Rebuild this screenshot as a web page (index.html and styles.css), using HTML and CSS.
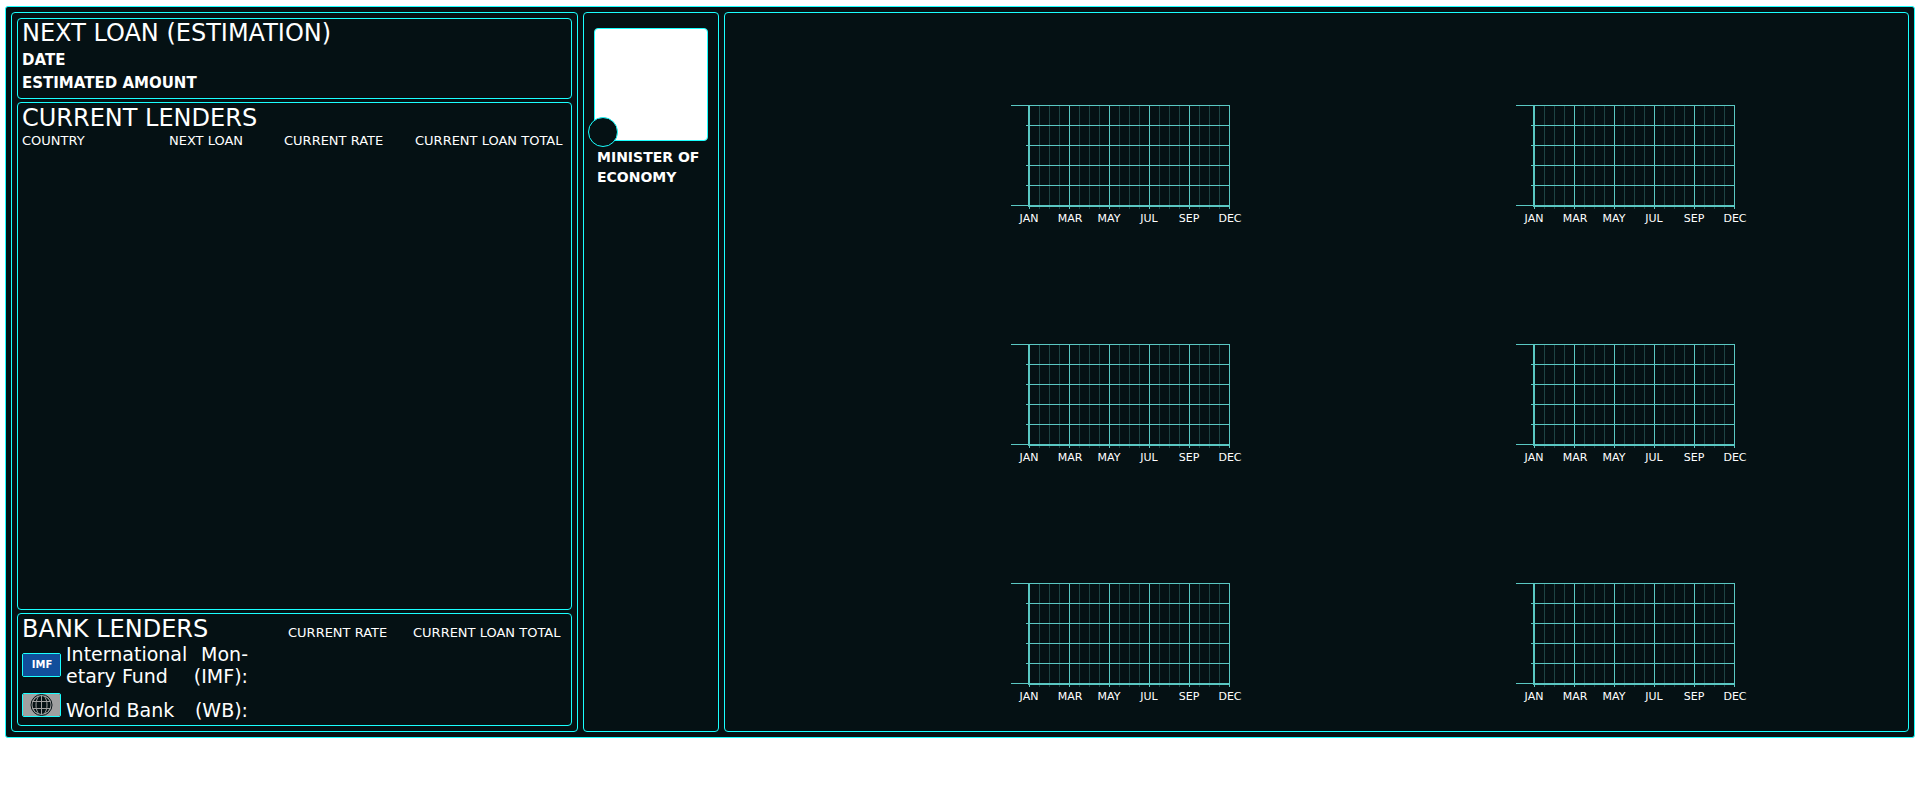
FILE: index.html
```html
<!DOCTYPE html>
<html lang="en">
<head>
<meta charset="utf-8">
<title>Economy</title>
<link rel="stylesheet" href="styles.css">
</head>
<body>
<svg class="defs" aria-hidden="true">
  <symbol id="chart" viewBox="0 0 234 125" overflow="visible">
    <path class="minor" d="M28.5 5V109M38.5 5V109M48.5 5V109M68.5 5V109M78.5 5V109M88.5 5V109M108.5 5V109M118.5 5V109M128.5 5V109M148.5 5V109M158.5 5V109M168.5 5V109M188.5 5V109M198.5 5V109M208.5 5V109"/>
    <path class="major" d="M58.5 5V109M98.5 5V109M138.5 5V109M178.5 5V109M218.5 5V109M18.5 5V109M17.5 5V107M0 5.5H219M15 25.5H219M15 45.5H219M15 65.5H219M15 85.5H219M0 105.5H219M17 106.5H219"/>
    <g class="months">
      <text x="18" y="122">JAN</text><text x="59" y="122">MAR</text><text x="98" y="122">MAY</text><text x="138" y="122">JUL</text><text x="178" y="122">SEP</text><text x="219" y="122">DEC</text>
    </g>
  </symbol>
</svg>
<main class="board">
  <section class="panel loans">
    <section class="card estimate">
      <h2 class="title">NEXT LOAN (ESTIMATION)</h2>
      <h3 class="label">DATE</h3>
      <h3 class="label">ESTIMATED AMOUNT</h3>
    </section>
    <section class="card lenders">
      <h2 class="title">CURRENT LENDERS</h2>
      <table class="table">
        <colgroup><col class="c-country"><col class="c-next"><col class="c-rate"><col></colgroup>
        <thead><tr><th>COUNTRY</th><th>NEXT LOAN</th><th>CURRENT RATE</th><th>CURRENT LOAN TOTAL</th></tr></thead>
      </table>
    </section>
    <section class="card banks">
      <table class="table">
        <colgroup><col class="c-bank"><col class="c-bank-rate"><col></colgroup>
        <thead><tr><th class="title">BANK LENDERS</th><th>CURRENT RATE</th><th>CURRENT LOAN TOTAL</th></tr></thead>
        <tbody>
          <tr><td>
            <div class="bank">
              <svg class="flag" viewBox="0 0 37 22" role="img" aria-label="IMF flag"><rect width="37" height="22" fill="#114e9b"/><text class="flag-text" x="19" y="14">IMF</text></svg>
              <div class="name"><span>International</span><span>Mon-</span><span>etary Fund</span><span>(IMF):</span></div>
            </div>
          </td><td></td><td></td></tr>
          <tr><td>
            <div class="bank bank-wb">
              <svg class="flag" viewBox="0 0 37 22" role="img" aria-label="World Bank flag"><rect width="37" height="22" fill="#a0a0a0"/><circle cx="18.5" cy="11" r="10.5" fill="none" stroke="#051114"/><circle cx="18.5" cy="11" r="9" fill="#051114"/><path fill="none" stroke="#a0a0a0" d="M18.5 2V20M9.5 7.5H27.5M9.5 14.5H27.5M16 2C12 6 12 16 16 20M21 2C25 6 25 16 21 20"/></svg>
              <div class="name"><span>World Bank</span><span>(WB):</span></div>
            </div>
          </td><td></td><td></td></tr>
        </tbody>
      </table>
    </section>
  </section>
  <section class="panel minister">
    <div class="portrait"><span class="badge"></span></div>
    <h3 class="role">MINISTER OF ECONOMY</h3>
  </section>
  <section class="panel charts">
    <svg class="chart"><use href="#chart"/></svg>
    <svg class="chart chart-right"><use href="#chart"/></svg>
    <svg class="chart"><use href="#chart"/></svg>
    <svg class="chart chart-right"><use href="#chart"/></svg>
    <svg class="chart"><use href="#chart"/></svg>
    <svg class="chart chart-right"><use href="#chart"/></svg>
  </section>
</main>
</body>
</html>
```
FILE: styles.css
```css
* { box-sizing: border-box; }
body {
  margin: 6px 5px;
  background: #fff;
  color: #fff;
  font-family: "DejaVu Sans", sans-serif;
}
h2, h3 { margin: 0; }
.defs { display: none; }
.board {
  display: grid;
  grid-template-columns: 567px 136px 1fr;
  column-gap: 5px;
  padding: 5px;
  background: #051114;
  border: 1px solid #1affff;
  border-radius: 3px;
}
.panel, .card {
  border: 1px solid #1affff;
  border-radius: 4px;
}
.loans {
  display: flex;
  flex-direction: column;
  gap: 3px;
  padding: 5px;
}
.card { padding: 0 0 4px 4px; }
.card.estimate { padding-bottom: 3px; }
.lenders { flex: 1; }
.card.lenders { padding-top: 1px; }
.title {
  font-size: 24px;
  line-height: 28px;
  font-weight: 400;
}
.label {
  font-size: 15px;
  line-height: 23px;
  font-weight: 700;
}
.estimate .title { margin-bottom: 2px; }
.lenders .title { margin-bottom: 1px; }
.table {
  width: 100%;
  table-layout: fixed;
  border-collapse: collapse;
}
.table th, .table td {
  padding: 0;
  text-align: left;
  font-weight: 400;
  white-space: nowrap;
  vertical-align: baseline;
}
.table th:not(.title) { font-size: 13px; line-height: 16px; }
.c-country { width: 147px; }
.c-next { width: 115px; }
.c-rate { width: 131px; }
.c-bank { width: 266px; }
.c-bank-rate { width: 125px; }
.card.banks { padding-top: 1px; }
.bank {
  display: flex;
  align-items: center;
  gap: 5px;
}
.bank-wb { align-items: flex-end; padding-top: 6px; }
.flag {
  width: 39px;
  height: 24px;
  flex: none;
  border: 1px solid #1affff;
  border-radius: 2px;
}
.bank-wb .flag { margin-bottom: 4px; }
.flag-text {
  fill: #fff;
  font-size: 10px;
  font-weight: 700;
  text-anchor: middle;
}
.name {
  display: flex;
  flex-wrap: wrap;
  justify-content: space-between;
  width: 182px;
  font-size: 19px;
  line-height: 22px;
}
.minister { padding: 15px 10px; }
.portrait {
  position: relative;
  height: 113px;
  background: #fff;
  border: 1px solid #1affff;
  border-radius: 4px;
}
.badge {
  position: absolute;
  left: -7px;
  bottom: -7px;
  width: 30px;
  height: 30px;
  background: #051114;
  border: 1px solid #1affff;
  border-radius: 50%;
}
.role {
  margin: 6px 0 0 3px;
  font-size: 14px;
  line-height: 20px;
  font-weight: 700;
}
.charts {
  display: grid;
  grid-template-columns: 520fr 505fr 158fr;
  padding-bottom: 1px;
}
.chart {
  grid-column: 1;
  justify-self: end;
  width: 234px;
  height: 125px;
  margin: 87px 0 27px;
  overflow: visible;
}
.chart-right { grid-column: 2; }
.minor, .major { fill: none; shape-rendering: crispEdges; }
.minor { stroke: #1e4444; }
.major { stroke: #5ac8c3; }
.months {
  fill: #fff;
  font-size: 11px;
  text-anchor: middle;
}
```
